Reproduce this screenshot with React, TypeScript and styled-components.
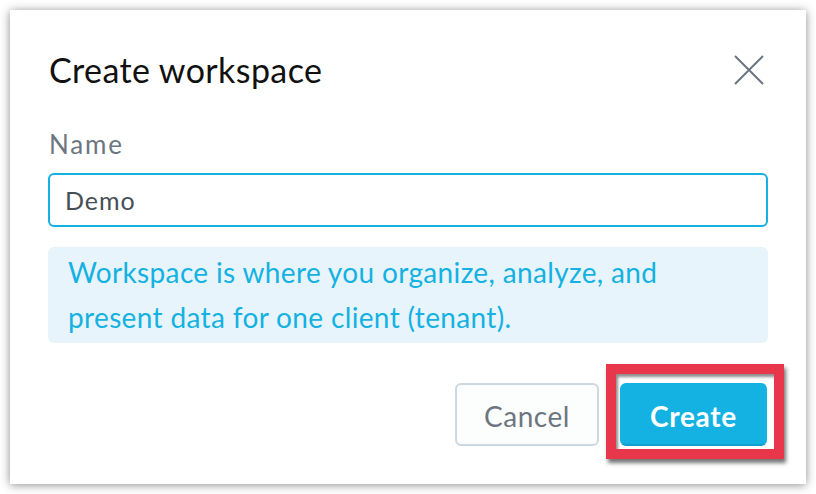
import React from "react";
import styled, { createGlobalStyle } from "styled-components";

const Global = createGlobalStyle`
  html, body { margin: 0; padding: 0; background: #ffffff; }
  body { font-family: Lato, "Noto Sans", sans-serif; }
  * { box-sizing: border-box; }
`;

const Page = styled.div`
  width: 816px;
  height: 494px;
  padding: 10px;
`;

const Dialog = styled.div`
  width: 796px;
  height: 474px;
  background: #ffffff;
  box-shadow: 0 1px 9px rgba(0, 0, 0, 0.45);
  padding: 40px 38px 38px 38px;
  display: flex;
  flex-direction: column;
`;

const Header = styled.div`
  height: 40px;
  display: flex;
  align-items: center;
  justify-content: space-between;
`;

const Title = styled.h1`
  margin: 0 0 0 1px;
  font-size: 34px;
  letter-spacing: 0.4px;
  font-weight: 400;
  color: #111111;
  line-height: 40px;
`;

const CloseButton = styled.button`
  width: 30px;
  height: 30px;
  padding: 0;
  margin-right: 4px;
  border: none;
  background: none;
  display: flex;
  align-items: center;
  justify-content: center;
`;

const Label = styled.label`
  margin-top: 40px;
  margin-left: 1px;
  height: 28px;
  line-height: 28px;
  font-size: 26px;
  letter-spacing: 1.8px;
  color: #6d7680;
`;

const Input = styled.input`
  margin-top: 15px;
  height: 54px;
  width: 100%;
  border: 2px solid #14b2e2;
  border-radius: 6px;
  padding: 0 15px;
  font-family: Lato, "Noto Sans", sans-serif;
  font-size: 25px;
  letter-spacing: 1px;
  color: #464e56;
  outline: none;
`;

const Info = styled.div`
  margin-top: 20px;
  height: 96px;
  background: #e8f4fb;
  border-radius: 6px;
  padding: 3px 20px;
  font-size: 28px;
  letter-spacing: 0.35px;
  line-height: 45px;
  color: #14b2e2;
`;

const Footer = styled.div`
  margin-top: 40px;
  display: flex;
  justify-content: flex-end;
  gap: 21px;
  padding-right: 1px;
`;

const Button = styled.button<{ $primary?: boolean }>`
  position: relative;
  height: 63px;
  width: ${(p) => (p.$primary ? "147px" : "144px")};
  border-radius: 6px;
  font-family: Lato, "Noto Sans", sans-serif;
  font-size: 28px;
  letter-spacing: ${(p) => (p.$primary ? "0.7px" : "0.5px")};
  font-weight: ${(p) => (p.$primary ? 700 : 400)};
  color: ${(p) => (p.$primary ? "#ffffff" : "#6d7680")};
  background: ${(p) => (p.$primary ? "#14b2e2" : "#fcfdfd")};
  border: 2px solid ${(p) => (p.$primary ? "#14b2e2" : "#ccd8e2")};
  border-bottom-color: ${(p) => (p.$primary ? "#129fcb" : "#ccd8e2")};
  padding: 3px 0 0 0;
`;

const Highlight = styled.span`
  position: absolute;
  left: -16px;
  top: -21px;
  width: 178px;
  height: 95px;
  border: 10px solid #e8374a;
  box-shadow: 2px 4px 4px rgba(0, 0, 0, 0.55),
    inset 2px 3px 3px rgba(0, 0, 0, 0.45);
  pointer-events: none;
`;

export default function App() {
  return (
    <>
      <Global />
      <Page>
        <Dialog>
          <Header>
            <Title>Create workspace</Title>
            <CloseButton aria-label="Close">
              <svg width="30" height="30" viewBox="0 0 30 30">
                <path
                  d="M1 1 L29 29 M29 1 L1 29"
                  stroke="#6d7680"
                  strokeWidth="2"
                  fill="none"
                />
              </svg>
            </CloseButton>
          </Header>
          <Label>Name</Label>
          <Input defaultValue="Demo" />
          <Info>
            Workspace is where you organize, analyze, and
            <br />
            present data for one client (tenant).
          </Info>
          <Footer>
            <Button>Cancel</Button>
            <Button $primary>
              Create
              <Highlight />
            </Button>
          </Footer>
        </Dialog>
      </Page>
    </>
  );
}
